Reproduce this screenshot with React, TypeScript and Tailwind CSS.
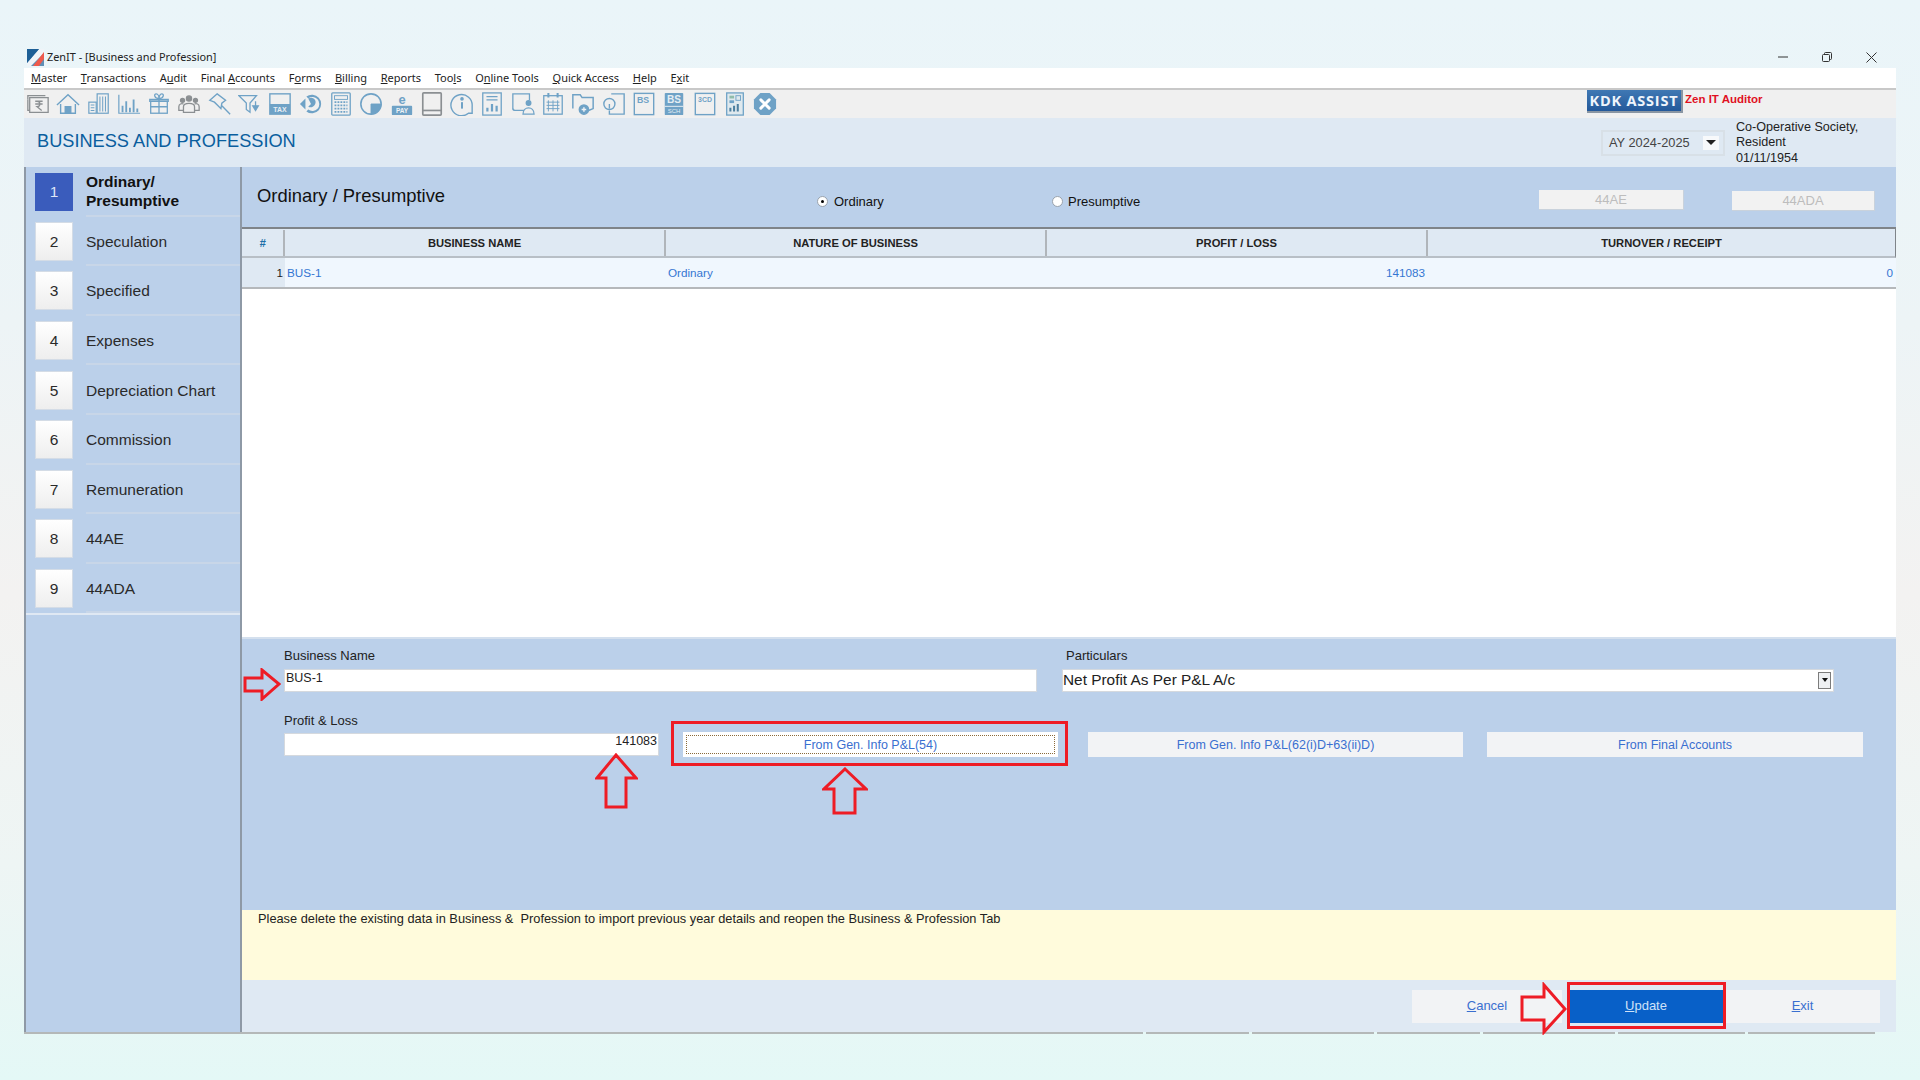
import React from 'react';

const menus = [
  { pre: '', key: 'M', post: 'aster' },
  { pre: '', key: 'T', post: 'ransactions' },
  { pre: 'A', key: 'u', post: 'dit' },
  { pre: 'Final ', key: 'A', post: 'ccounts' },
  { pre: 'F', key: 'o', post: 'rms' },
  { pre: '', key: 'B', post: 'illing' },
  { pre: '', key: 'R', post: 'eports' },
  { pre: 'Too', key: 'l', post: 's' },
  { pre: 'O', key: 'n', post: 'line Tools' },
  { pre: '', key: 'Q', post: 'uick Access' },
  { pre: '', key: 'H', post: 'elp' },
  { pre: 'E', key: 'x', post: 'it' }
];

const steps = [
  'Ordinary/ Presumptive',
  'Speculation',
  'Specified',
  'Expenses',
  'Depreciation Chart',
  'Commission',
  'Remuneration',
  '44AE',
  '44ADA'
];

const columns = [
  { label: 'BUSINESS NAME', width: 'w-[381px]' },
  { label: 'NATURE OF BUSINESS', width: 'w-[381px]' },
  { label: 'PROFIT / LOSS', width: 'w-[381px]' },
  { label: 'TURNOVER / RECEIPT', width: 'flex-1' }
];

const edgeSegments = ['w-[1119px]', 'w-[103px]', 'w-[122px]', 'w-[103px]', 'w-[132px]', 'w-[127px]', 'w-[127px]'];

const B = '#6fa2c6';
const G = '#8b8f92';

const icons: React.ReactNode[] = [
  <g stroke={G} strokeWidth="1.4" fill="none">
    <path d="M2 8V4h19" />
    <path d="M4 22V6h20v16z" />
    <path d="M2 8v12h2" />
    <path d="M10 10h8M10 13h8M12 10c4 0 4 6 0 6l5 4" />
  </g>,
  <g stroke={B} strokeWidth="1.5" fill="none">
    <path d="M1 14 13 3l12 11" />
    <path d="M5 13v10h16V13" />
    <path d="M10 23v-7h6v7" fill={B} />
  </g>,
  <g stroke={B} strokeWidth="1.3" fill="none">
    <rect x="2" y="11" width="8" height="12" />
    <rect x="11" y="2" width="12" height="21" />
    <path d="M14 5v16M17 5v16M20 5v16M4 14h4M4 17h4M4 20h4" strokeWidth="1.1" />
  </g>,
  <g stroke={B} strokeWidth="2" fill="none">
    <path d="M2 3v20h23" strokeWidth="1.3" />
    <path d="M6 22v-7M10 22V10M14 22v-5M18 22V8M22 22v-4" />
  </g>,
  <g stroke={B} strokeWidth="1.4" fill="none">
    <rect x="4" y="10" width="18" height="13" />
    <path d="M3 10h20v-2H3zM13 7v16M4 16h18" />
    <path d="M13 7C8 7 7 2 10 2c2 0 3 3 3 5 0-2 1-5 3-5 3 0 2 5-3 5z" />
  </g>,
  <g stroke={G} strokeWidth="1.4" fill="none">
    <circle cx="13" cy="7" r="2.8" fill={G} />
    <circle cx="6" cy="9" r="2.2" fill={G} />
    <circle cx="20" cy="9" r="2.2" fill={G} />
    <path d="M7 22v-6c0-5 12-5 12 0v6zM7 20H2v-4c0-3 3-4 5-3M19 20h5v-4c0-3-3-4-5-3" />
  </g>,
  <g stroke={B} strokeWidth="1.5" fill="none">
    <path d="M10 2 2 9l5 2 7 7 1-6 4-3z" />
    <path d="m15 15 9 9" />
  </g>,
  <g stroke={B} strokeWidth="1.4" fill="none">
    <path d="M1 4h19l-7 8v10l-4-3v-7z" />
    <path d="M19 10v7M16 15h6l-3 5z" fill={B} />
  </g>,
  <g>
    <rect x="2" y="2" width="22" height="22" stroke={B} strokeWidth="1.5" fill="none" />
    <rect x="2" y="13" width="22" height="11" fill={B} />
    <text x="13" y="22" textAnchor="middle" fontSize="7.5" fontWeight="700" fill="#e8eef3" fontFamily="Liberation Sans">
      TAX
    </text>
  </g>,
  <g fill={B}>
    <path d="M1 13 7 7v12z" />
    <path d="M8 5a10 10 0 1 1 0 16l2-2a7.5 7.5 0 1 0 0-12z" />
    <path d="M10 7c6-3 10 3 7 7-2 3-5 3-7 2l3-3z" />
  </g>,
  <g stroke={B} strokeWidth="1.4" fill="none">
    <rect x="3" y="1" width="20" height="24" rx="1" />
    <rect x="6" y="4" width="14" height="4" strokeWidth="1" />
    <path d="M6 11h14M6 14.5h14M6 18h14M6 21.5h14" strokeDasharray="2 1.2" strokeWidth="2" />
  </g>,
  <g stroke={B} fill="none">
    <circle cx="13" cy="13" r="11" strokeWidth="1.7" />
    <path d="M13 13h11a11 11 0 0 1-11 11z" fill={B} />
  </g>,
  <g>
    <text x="13" y="12.5" textAnchor="middle" fontSize="14" fontWeight="700" fill={B} fontFamily="Liberation Sans">
      e
    </text>
    <rect x="2" y="15" width="22" height="10" rx="1" fill={B} />
    <text x="13" y="23" textAnchor="middle" fontSize="7" fontWeight="700" fill="#eef2f5" fontFamily="Liberation Sans">
      PAY
    </text>
  </g>,
  <g stroke={G} strokeWidth="1.8" fill="none">
    <rect x="3" y="1" width="20" height="24" rx="1" />
    <path d="M3 20h20" />
  </g>,
  <g stroke={B} strokeWidth="1.5" fill="none">
    <path d="M24 23h-4a11.5 11.5 0 1 1 4-8z" />
    <path d="M13 11v7" strokeWidth="2.2" />
    <circle cx="13" cy="7.5" r="1.2" fill={B} />
  </g>,
  <g stroke={B} strokeWidth="1.4" fill="none">
    <rect x="3" y="1" width="20" height="24" />
    <path d="M7 5h12M7 8.5h12" />
    <path d="M8 21v-4M13 21v-8M18 21v-6" strokeWidth="2.4" />
  </g>,
  <g stroke={B} strokeWidth="1.4" fill="none">
    <path d="M14 20H4a2 2 0 0 1-2-2V2h18v7" />
    <path d="M2 18a2 2 0 0 0 2 2" />
    <circle cx="19" cy="12" r="2.5" fill={B} />
    <path d="M13 24c0-9 12-9 12 0z" />
  </g>,
  <g stroke={B} strokeWidth="1.4" fill="none">
    <rect x="3" y="4" width="20" height="20" />
    <path d="M8 1v5M18 1v5" strokeWidth="2.2" />
    <path d="M6 11h14M6 14.5h14M6 18h14M8 9v12M13 9v12M18 9v12" strokeWidth="1" />
  </g>,
  <g stroke={B} strokeWidth="1.6" fill="none">
    <path d="M2 18V3h8l2 3h12v12l-5 2" />
    <circle cx="14" cy="19" r="5" fill={B} />
    <path d="M14 16.5v5M11.5 19h5" stroke="#eef2f5" />
  </g>,
  <g stroke={B} strokeWidth="1.5" fill="none">
    <path d="M10 2h14v22H8v-4" />
    <circle cx="8" cy="13" r="6" />
    <path d="M8 13v5" />
  </g>,
  <g>
    <rect x="2.5" y="1.5" width="21" height="23" stroke={B} strokeWidth="1.5" fill="none" />
    <text x="12" y="12" textAnchor="middle" fontSize="9.5" fontWeight="700" fill={B} fontFamily="Liberation Sans">
      BS
    </text>
  </g>,
  <g>
    <rect x="3" y="1" width="20" height="24" rx="1" fill={B} />
    <rect x="3" y="15" width="20" height="1" fill="#eef2f5" />
    <text x="13" y="12" textAnchor="middle" fontSize="11" fontWeight="700" fill="#e4edf3" fontFamily="Liberation Sans">
      BS
    </text>
    <text x="13" y="23" textAnchor="middle" fontSize="6.5" fill="#e4edf3" fontFamily="Liberation Sans">
      SCH
    </text>
  </g>,
  <g>
    <rect x="2.5" y="1.5" width="21" height="23" stroke={B} strokeWidth="1.5" fill="none" />
    <text x="13" y="11" textAnchor="middle" fontSize="7.5" fontWeight="700" fill={B} fontFamily="Liberation Sans">
      3CD
    </text>
  </g>,
  <g>
    <rect x="4" y="1" width="18" height="24" fill="#dfe9ee" stroke={B} strokeWidth="1.4" />
    <rect x="7" y="4" width="5" height="3" fill="#8fbcaa" />
    <rect x="14" y="4" width="5" height="5" fill="none" stroke={B} />
    <rect x="7" y="9" width="5" height="3" fill={B} />
    <path d="M8 21v-4M12 21v-6M16 21v-8" stroke="#4d7f9f" strokeWidth="2.2" />
  </g>,
  <g>
    <path d="M8 1h10l7 7v10l-7 7H8l-7-7V8z" fill={B} />
    <path d="m8.5 8.5 9 9M17.5 8.5l-9 9" stroke="#fff" strokeWidth="3.2" strokeLinecap="round" />
  </g>
];

function Arrow({ className, points, w, h }: { className: string; points: string; w: number; h: number }) {
  return (
    <svg className={`absolute ${className}`} width={w} height={h} viewBox={`0 0 ${w} ${h}`}>
      <polygon points={points} fill="none" stroke="#ee1c25" strokeWidth="3" strokeLinejoin="miter" />
    </svg>
  );
}

function Accel({ k, rest }: { k: string; rest: string }) {
  return (
    <>
      <span className="underline">{k}</span>
      {rest}
    </>
  );
}

export default function App() {
  return (
    <div className="relative w-[1920px] h-[1080px] overflow-hidden pt-[46px] px-[24px] font-['Liberation_Sans',Arial,sans-serif] bg-[linear-gradient(180deg,#eaf5f9_0%,#edf4f6_30%,#f3f2f1_55%,#eef5f4_80%,#e4f8f6_100%)]">
      {/* title bar */}
      <div className="flex items-center h-[22px] text-[#222]">
        <svg width="17" height="17" viewBox="0 0 17 17" className="ml-[3px]">
          <rect width="17" height="17" fill="#5f8fb5" />
          <path d="M17 0v4L4 17H0v-3L12 0z" fill="#f0f4f8" />
          <path d="M17 3v7l-5 7H6z" fill="#ef5a4c" />
          <path d="M12 0 0 14V0z" fill="#1d5f96" />
        </svg>
        <span className="ml-[3px] text-[10.9px] font-['Noto_Sans',sans-serif]">ZenIT - [Business and Profession]</span>
        <div className="ml-auto flex items-center gap-[34px] mr-[19px]">
          <svg width="10" height="10" viewBox="0 0 10 10">
            <path d="M0 5h10" stroke="#333" strokeWidth="1" />
          </svg>
          <svg width="10" height="10" viewBox="0 0 10 10" fill="none" stroke="#333">
            <rect x="0.5" y="2.5" width="7" height="7" rx="1" />
            <path d="M2.5 2.5v-1a1 1 0 0 1 1-1h5a1 1 0 0 1 1 1v5a1 1 0 0 1-1 1h-1" />
          </svg>
          <svg width="11" height="11" viewBox="0 0 11 11">
            <path d="m.5.5 10 10M10.5.5l-10 10" stroke="#333" />
          </svg>
        </div>
      </div>

      {/* menu */}
      <div className="flex items-center h-[20px] pl-[7px] gap-[13.7px] bg-white text-[11px] text-[#222] font-['Noto_Sans',sans-serif]">
        {menus.map((m, index) => (
          <span key={index}>
            {m.pre}
            <Accel k={m.key} rest={m.post} />
          </span>
        ))}
      </div>

      {/* toolbar */}
      <div className="flex items-center h-[30px] bg-[#f0f0f0] border-t-2 border-[#c8c8c8] pl-[2px]">
        <div className="flex gap-[6.3px]">
          {icons.map((icon, index) => (
            <svg key={index} width="24" height="24" viewBox="0 0 26 26">
              {icon}
            </svg>
          ))}
        </div>
        <div className="ml-auto -mt-[5px] flex items-center w-[309px]">
          <span className="flex items-center justify-center w-[96px] h-[23px] bg-[linear-gradient(180deg,#3f78b4,#24599a)] border-b-2 border-r-2 border-[#8a96a3] text-[#eef4fb] text-[14.5px] font-bold tracking-[0.8px] font-['Open_Sans',sans-serif]">
            KDK ASSIST
          </span>
          <span className="ml-[2px] -mt-[4px] text-[#e0101f] text-[11.5px] font-bold">Zen IT Auditor</span>
        </div>
      </div>

      {/* page header */}
      <div className="flex items-center h-[49px] bg-[#dfe9f3]">
        <h1 className="ml-[13px] -mt-[2px] text-[18.2px] text-[#0a5e9e]">BUSINESS AND PROFESSION</h1>
        <div className="ml-auto flex items-center justify-between w-[124px] h-[26px] border-2 border-[#d8e0e7] pl-[6px] pr-[4px] text-[12.8px] text-[#444]">
          AY 2024-2025
          <span className="flex items-center justify-center w-[16px] h-[14px] bg-[#f7f9fb]">
            <span className="w-0 h-0 border-x-[5px] border-x-transparent border-t-[5px] border-t-[#222]" />
          </span>
        </div>
        <div className="ml-[11px] w-[160px] text-[12.6px] leading-[15.5px] text-[#222] pt-[1px]">
          Co-Operative Society,
          <br />
          Resident
          <br />
          01/11/1954
        </div>
      </div>

      {/* main */}
      <div className="flex h-[865px] bg-[#bbd0ea]">
        <aside className="w-[218px] border-l-2 border-r-2 border-[#8e99a6] text-[15.5px] text-[#2a2a2a]">
          {steps.map((step, index) => (
            <div key={step} className="flex h-[49.6px] pl-[9px]">
              <div className="flex items-center w-[38px] shrink-0">
                <span
                  className={
                    index === 0
                      ? 'flex items-center justify-center w-[38px] h-[38px] bg-[#3a5cbc] text-[#dfe6f7]'
                      : 'flex items-center justify-center w-[38px] h-[39px] bg-[linear-gradient(180deg,#fff,#eeeeee)] border border-[#d4dce6]'
                  }>
                  {index + 1}
                </span>
              </div>
              <div
                className={
                  index === 0
                    ? 'flex items-center flex-1 ml-[13px] border-b-2 border-[#c8d6e8] font-bold text-[#111] leading-[18.5px] pt-[2px]'
                    : 'flex items-center flex-1 ml-[13px] border-b-2 border-[#c8d6e8] pt-[2px]'
                }>
                {step}
              </div>
            </div>
          ))}
          <div className="h-[2px] bg-[#dfe8f3]" />
        </aside>

        <main className="flex flex-col flex-1 min-w-0">
          <div className="relative flex items-center h-[60px] pl-[15px] text-[#111]">
            <h2 className="-mt-[2px] text-[18.4px]">Ordinary / Presumptive</h2>
            <label className="absolute left-[575px] top-[25px] flex items-center gap-[6px] text-[13px]">
              <span className="flex items-center justify-center w-[11px] h-[11px] rounded-full bg-white border border-[#9aa3ad]">
                <span className="w-[3px] h-[3px] rounded-full bg-black" />
              </span>
              Ordinary
            </label>
            <label className="absolute left-[810px] top-[25px] flex items-center gap-[5px] text-[13px]">
              <span className="w-[11px] h-[11px] rounded-full bg-white border border-[#9aa3ad]" />
              Presumptive
            </label>
            <button className="absolute left-[1297px] top-[23px] w-[145px] h-[20px] bg-[#f2f2f2] border-b border-r border-[#c9d2dc] text-[13px] text-[#bdbdbd]">
              44AE
            </button>
            <button className="absolute left-[1490px] top-[24px] w-[143px] h-[20px] bg-[#f2f2f2] border-b border-r border-[#c9d2dc] text-[13px] text-[#bdbdbd]">
              44ADA
            </button>
          </div>

          {/* table */}
          <div className="flex h-[31px] bg-[#dfe9f3] border-t-2 border-b-2 border-r border-t-[#7f8489] border-b-[#b8bfc6] border-r-[#7f8489] pt-[1px] text-[11.2px] font-bold text-[#222]">
            <div className="flex items-center justify-center w-[43px] border-r-2 border-[#b0b5ba] text-[#1d6fa8] italic">#</div>
            {columns.map((col) => (
              <div
                key={col.label}
                className={`flex items-center justify-center ${col.width} border-r-2 border-[#b0b5ba] last:border-r-0`}>
                {col.label}
              </div>
            ))}
          </div>
          <div className="flex h-[31px] bg-[#f0f7fe] border-b-2 border-[#b5b8bb] text-[11.7px] text-[#3476d2]">
            <div className="flex items-center justify-end w-[43px] pr-[2px] bg-[#dfe9f3] text-[#222]">1</div>
            <div className="flex items-center w-[381px] pl-[2px]">BUS-1</div>
            <div className="flex items-center w-[381px] pl-[2px]">Ordinary</div>
            <div className="flex items-center justify-end w-[381px] pr-[3px]">141083</div>
            <div className="flex items-center justify-end flex-1 pr-[3px]">0</div>
          </div>
          <div className="h-[350px] bg-white border-b-2 border-[#d4e0ee]" />

          {/* form */}
          <div className="flex-1 pl-[42px] text-[13px] text-[#222]">
            <div className="flex mt-[7px]">
              <div className="w-[753px]">
                <div className="h-[23px] leading-[20px]">Business Name</div>
                <div className="h-[23px] bg-white border border-[#d5d9de] pl-[1px] text-[12.5px] leading-[16px]">BUS-1</div>
              </div>
              <div className="ml-[25px] w-[772px]">
                <div className="h-[23px] leading-[20px] pl-[4px]">Particulars</div>
                <div className="flex items-center justify-between h-[23px] bg-white border border-[#d5d9de] pr-[2px] pb-[1px] text-[15.4px]">
                  Net Profit As Per P&amp;L A/c
                  <span className="flex items-center justify-center w-[13px] h-[17px] bg-[#eef0f2] border border-[#7c7c7c]">
                    <span className="w-0 h-0 border-x-[3px] border-x-transparent border-t-[4px] border-t-[#111]" />
                  </span>
                </div>
              </div>
            </div>
            <div className="flex items-start mt-[20px]">
              <div className="w-[375px]">
                <div className="h-[21px] leading-[17px]">Profit &amp; Loss</div>
                <div className="h-[23px] bg-white border border-[#d5d9de] pr-[1px] text-right text-[12.5px] leading-[15px]">141083</div>
              </div>
              <div className="flex gap-[30px] mt-[20px] ml-[24px] text-[12.5px] text-[#3a6fd0]">
                <button className="w-[375px] h-[25px] bg-white p-[3px]">
                  <span className="block h-full leading-[18px] border border-dotted border-[#8a6a3a]">From Gen. Info P&amp;L(54)</span>
                </button>
                <button className="w-[375px] h-[25px] pt-[1px] bg-[#f2f3f5]">From Gen. Info P&amp;L(62(i)D+63(ii)D)</button>
                <button className="-ml-[6px] w-[376px] h-[25px] pt-[1px] bg-[#f2f3f5]">From Final Accounts</button>
              </div>
            </div>
          </div>

          {/* note */}
          <div className="h-[70px] bg-[#fffbdc] pl-[16px] pt-[1px] text-[12.8px] leading-[15px] text-[#222] whitespace-pre">
            Please delete the existing data in Business &amp;  Profession to import previous year details and reopen the Business &amp; Profession Tab
          </div>

          {/* footer */}
          <div className="flex items-center justify-end h-[52px] bg-[#dfe9f3] pr-[16px] text-[13px] text-[#3a6fd0]">
            <button className="w-[150px] h-[33px] bg-[#f2f3f5]">
              <Accel k="C" rest="ancel" />
            </button>
            <button className="ml-[7px] w-[154px] h-[33px] bg-[#0860c8] text-[#cfe2f8]">
              <Accel k="U" rest="pdate" />
            </button>
            <button className="ml-[2px] w-[155px] h-[33px] bg-[#f2f3f5]">
              <Accel k="E" rest="xit" />
            </button>
          </div>
        </main>
      </div>
      <div className="flex gap-[3px] h-[2px]">
        {edgeSegments.map((w, index) => (
          <div key={index} className={`${w} bg-[#b4b8b8]`} />
        ))}
      </div>

      {/* annotations */}
      <Arrow className="left-[243px] top-[668px]" w={38} h={33} points="2,10 19,10 19,2 36,16 19,31 19,23 2,23" />
      <Arrow className="left-[595px] top-[753px]" w={43} h={56} points="21,2 41,25 31,25 31,54 11,54 11,25 2,25" />
      <Arrow className="left-[822px] top-[767px]" w={46} h={48} points="23,2 44,22 33,22 33,46 12,46 12,22 2,22" />
      <Arrow className="left-[1520px] top-[982px]" w={47} h={53} points="2,15 24,15 24,3 45,27 24,50 24,38 2,38" />
      <div className="absolute left-[671px] top-[721px] w-[397px] h-[45px] border-[3px] border-[#ee1c25]" />
      <div className="absolute left-[1567px] top-[982px] w-[159px] h-[47px] border-[3px] border-[#ee1c25]" />
    </div>
  );
}
